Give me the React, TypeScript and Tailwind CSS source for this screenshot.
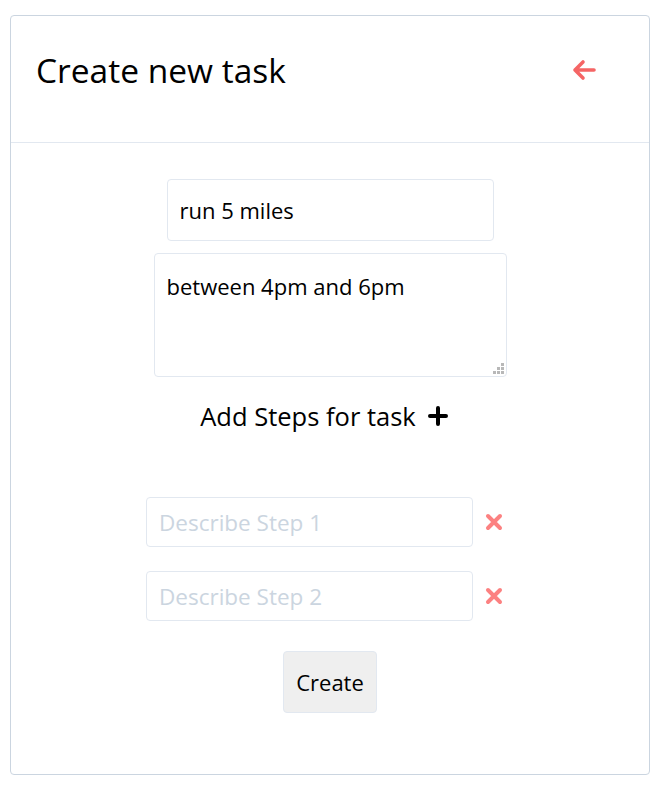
// Formulario "Create new task": título, descripción y pasos.
import { useState } from 'react'

function ArrowLeftIcon() {
  return (
    <svg width="26" height="22" viewBox="0 0 26 22" fill="none" stroke="currentColor" strokeWidth="3.6" strokeLinecap="round" strokeLinejoin="round" aria-hidden="true">
      <path d="M23 11H4M12 3l-8 8 8 8" />
    </svg>
  )
}

function TimesIcon() {
  return (
    <svg width="18" height="18" viewBox="0 0 18 18" fill="none" stroke="currentColor" strokeWidth="4" strokeLinecap="round" aria-hidden="true">
      <path d="M3 3l12 12M15 3L3 15" />
    </svg>
  )
}

function PlusIcon() {
  return (
    <svg width="20" height="20" viewBox="0 0 20 20" fill="none" stroke="currentColor" strokeWidth="4" strokeLinecap="round" aria-hidden="true">
      <path d="M10 2v16M2 10h16" />
    </svg>
  )
}

// Agarre punteado del textarea (esquina inferior derecha).
function Grip() {
  return (
    <svg width="11" height="11" viewBox="0 0 11 11" className="pointer-events-none absolute bottom-[3px] right-[3px]" fill="#b8b8b8" aria-hidden="true">
      <rect x="8" y="0" width="3" height="3" />
      <rect x="4" y="4" width="3" height="3" />
      <rect x="8" y="4" width="3" height="3" />
      <rect x="0" y="8" width="3" height="3" />
      <rect x="4" y="8" width="3" height="3" />
      <rect x="8" y="8" width="3" height="3" />
    </svg>
  )
}

export default function App() {
  const [titulo, setTitulo] = useState('run 5 miles')
  const [desc, setDesc] = useState('between 4pm and 6pm')
  const [pasos, setPasos] = useState(['', ''])

  return (
    <div className="min-h-screen bg-white pt-[15px] font-['Open_Sans',sans-serif] text-black">
      <div className="ml-[10px] h-[760px] w-[640px] rounded border border-[#cbd5e0]">
        <div className="flex h-[127px] items-center justify-between border-b border-[#e2e8f0] pb-[18px] pl-[25px] pr-[52px]">
          <h1 className="text-[33.5px]">Create new task</h1>
          <button type="button" aria-label="Volver" className="text-[#f56565]">
            <ArrowLeftIcon />
          </button>
        </div>

        <div className="flex flex-col items-center pt-9">
          <input
            value={titulo}
            onChange={(e) => setTitulo(e.target.value)}
            className="h-[62px] w-[327px] rounded border border-[#e2e8f0] px-3 text-[22px] outline-none"
          />
          <div className="relative mt-3">
            <textarea
              value={desc}
              onChange={(e) => setDesc(e.target.value)}
              className="block h-[124px] w-[353px] resize-none rounded border border-[#e2e8f0] px-3 py-[17px] text-[22px] leading-snug outline-none"
            />
            <Grip />
          </div>

          <div className="mt-[20px] flex items-center gap-3 pr-[12px] text-[25.5px]">
            <span>Add Steps for task</span>
            <button type="button" aria-label="Agregar paso">
              <PlusIcon />
            </button>
          </div>

          <div className="mt-[62px] flex flex-col gap-6 pr-[11px]">
            {pasos.map((p, i) => (
              <div key={i} className="flex items-center gap-3">
                <input
                  value={p}
                  onChange={(e) => setPasos(pasos.map((x, j) => (j === i ? e.target.value : x)))}
                  placeholder={`Describe Step ${i + 1}`}
                  className="h-[50px] w-[327px] rounded border border-[#e2e8f0] px-3 text-[22.5px] outline-none placeholder:text-[#cbd5e0]"
                />
                <button type="button" aria-label="Quitar paso" className="text-[#fc8181]">
                  <TimesIcon />
                </button>
              </div>
            ))}
          </div>

          <button
            type="button"
            className="mt-[30px] h-[62px] w-[94px] rounded border border-[#e2e8f0] bg-[#efefef] text-[22px]"
          >
            Create
          </button>
        </div>
      </div>
    </div>
  )
}
